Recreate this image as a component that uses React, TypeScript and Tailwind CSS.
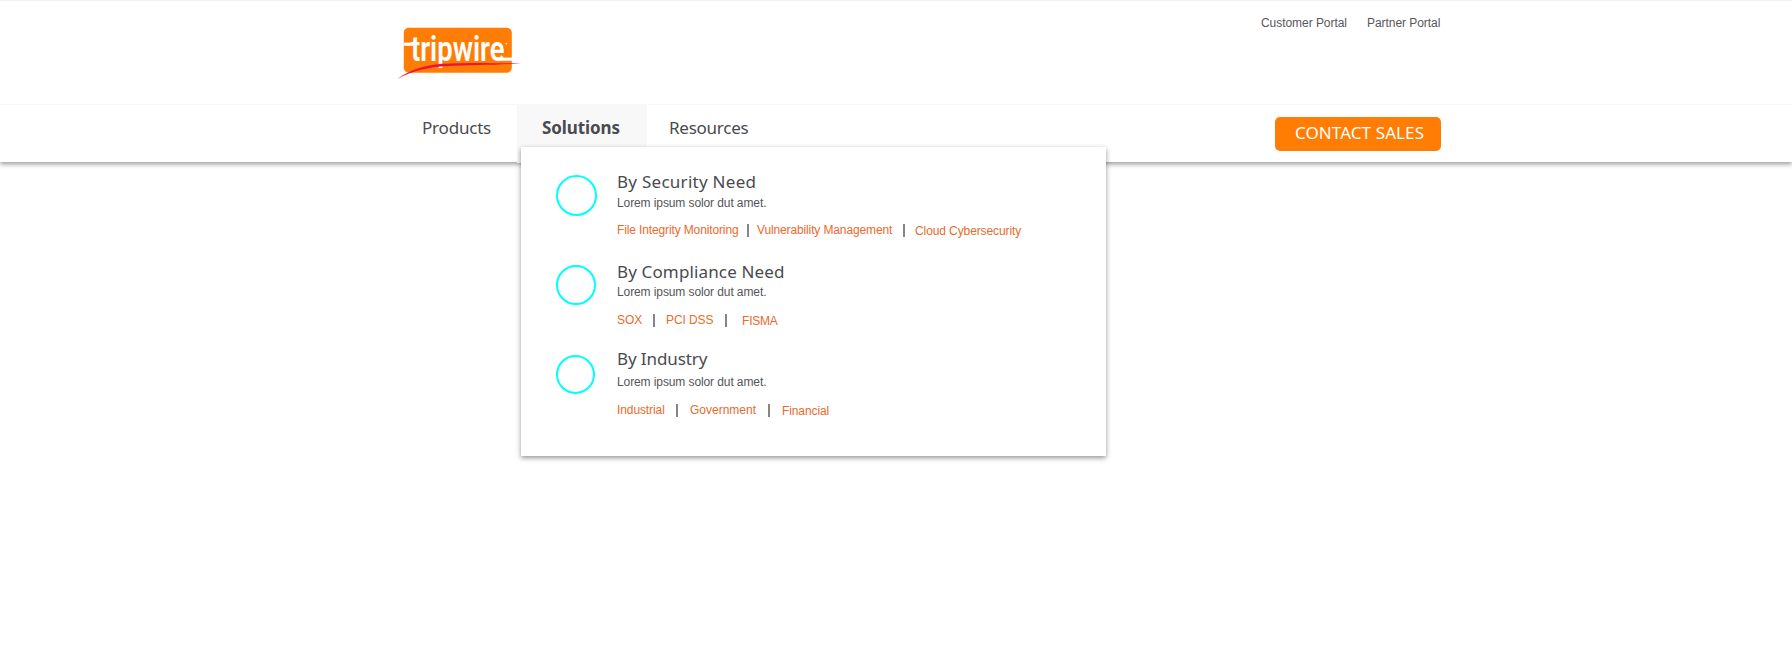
import React from "react";

type LinkItem = { label: string; cls: string };
type Section = {
  title: string;
  titleCls: string;
  textCls: string;
  circleCls: string;
  rowCls: string;
  cls: string;
  links: LinkItem[];
  bars: string[];
};

const sections: Section[] = [
  {
    title: "By Security Need",
    titleCls: "tracking-[0.27px]",
    textCls: "mt-px",
    circleCls: "mt-[5px] size-[41px]",
    rowCls: "mt-[11px]",
    cls: "h-[90px]",
    links: [
      { label: "File Integrity Monitoring", cls: "w-[130px] tracking-[-0.13px]" },
      { label: "Vulnerability Management", cls: "w-[146px] tracking-[-0.13px]" },
      { label: "Cloud Cybersecurity", cls: "pt-px tracking-[-0.1px]" },
    ],
    bars: ["mr-[8px]", "mr-[10px]"],
  },
  {
    title: "By Compliance Need",
    titleCls: "tracking-[0.14px]",
    textCls: "mt-0",
    circleCls: "mt-[5px] size-[40px]",
    rowCls: "mt-[12px]",
    cls: "h-[87px]",
    links: [
      { label: "SOX", cls: "w-[36px]" },
      { label: "PCI DSS", cls: "w-[59px] tracking-[-0.1px]" },
      { label: "FISMA", cls: "pt-px tracking-[-0.2px]" },
    ],
    bars: ["mr-[11px]", "mr-[15px]"],
  },
  {
    title: "By Industry",
    titleCls: "tracking-[-0.1px]",
    textCls: "mt-[3px]",
    circleCls: "mt-[8px] size-[39px]",
    rowCls: "mt-[12px]",
    cls: "h-[90px]",
    links: [
      { label: "Industrial", cls: "w-[59px] tracking-[-0.1px]" },
      { label: "Government", cls: "w-[78px]" },
      { label: "Financial", cls: "pt-px tracking-[-0.1px]" },
    ],
    bars: ["mr-[12px]", "mr-[12px]"],
  },
];

function Logo() {
  return (
    <svg
      width="126"
      height="72"
      viewBox="396 14 126 72"
      className="block overflow-visible"
      role="img"
      aria-label="tripwire"
    >
      <rect x="403.8" y="27.8" width="108" height="45" rx="5" fill="#ff7d05" />
      <rect x="403.8" y="42.6" width="12" height="3.2" fill="#fff" />
      <rect x="496" y="57.6" width="16" height="3.2" fill="#fff" />
      <text
        x="411"
        y="60.8"
        fontFamily="Roboto, sans-serif"
        fontWeight="600"
        fontSize="34.5"
        fill="#fff"
        textLength="93.5"
        lengthAdjust="spacingAndGlyphs"
      >
        tripwire
      </text>
      <circle cx="506.3" cy="43.8" r="0.8" fill="#fff" />
      <path
        d="M397.2 79 C410 70 424 65.2 442 63.8 C470 62 500 63.6 521.5 63.2 C500 65.2 470 64.8 448 66 C428 67.2 413 70.5 397.2 79 Z"
        fill="#ee1438"
      />
    </svg>
  );
}

function MenuSection({ s }: { s: Section }) {
  return (
    <section className={"flex " + s.cls}>
      <div className="w-[61px] shrink-0">
        <div className={"rounded-full border-2 border-[#00ffff] " + s.circleCls} />
      </div>
      <div>
        <h3 className={"h-6 whitespace-nowrap font-['Noto_Sans',sans-serif] text-[17px] leading-6 text-[#4a4a4f] " + s.titleCls}>
          {s.title}
        </h3>
        <p className={"h-4 whitespace-nowrap text-[12px] leading-4 tracking-[-0.1px] text-[#55555a] " + s.textCls}>
          Lorem ipsum solor dut amet.
        </p>
        <div className={"flex h-4 whitespace-nowrap text-[12px] leading-4 text-[#ea6a2c] " + s.rowCls}>
          {s.links.map((l, i) => (
            <React.Fragment key={l.label}>
              <a className={"shrink-0 " + l.cls}>{l.label}</a>
              {i < 2 && <span className={"mt-[2px] h-[13px] w-[2px] shrink-0 bg-[#85858a] " + s.bars[i]} />}
            </React.Fragment>
          ))}
        </div>
      </div>
    </section>
  );
}

export default function App() {
  return (
    <div className="h-[663px] w-full overflow-hidden bg-white font-['Liberation_Sans',Arial,sans-serif]">
      <div className="relative mx-auto h-[162px] w-[1792px] bg-white shadow-[0_2px_5px_rgba(0,0,0,0.42)]">
        <header className="flex h-[105px] justify-between border-t border-b border-t-[#f0f0f0] border-b-[#f7f7f7] pr-[352px] pl-[396px]">
          <div className="pt-[13px]">
            <Logo />
          </div>
          <div className="flex pt-[14px] text-[12px] leading-4 tracking-[-0.05px] text-[#57575b]">
            <a className="w-[106px]">Customer Portal</a>
            <a className="w-[73px] whitespace-nowrap">Partner Portal</a>
          </div>
        </header>
        <nav className="flex h-[57px] font-['Noto_Sans',sans-serif] text-[17px] leading-6 text-[#4a4a4f]">
          <a className="ml-[421px] w-[96px] pt-[11px] pl-px tracking-[-0.2px]">Products</a>
          <a className="-mt-px h-[59px] w-[130px] shrink-0 bg-[#f8f8f8] pt-[12px] pl-[25px] font-bold tracking-[-0.1px]">
            Solutions
          </a>
          <a className="ml-[21px] w-[607px] pt-[11px] pl-px tracking-[-0.25px]">Resources</a>
          <button className="mt-[12px] flex h-[34px] w-[166px] justify-center rounded-[5px] bg-[#ff7d05] pt-[4px] pl-[3px] leading-6 tracking-[0.1px] whitespace-nowrap text-white">
            CONTACT SALES
          </button>
        </nav>
        <div className="absolute top-[147px] left-[521px] h-[309px] w-[585px] bg-white pt-[23px] pl-[35px] shadow-[0_2px_5px_rgba(0,0,0,0.42)]">
          {sections.map((s) => (
            <MenuSection key={s.title} s={s} />
          ))}
        </div>
      </div>
    </div>
  );
}
